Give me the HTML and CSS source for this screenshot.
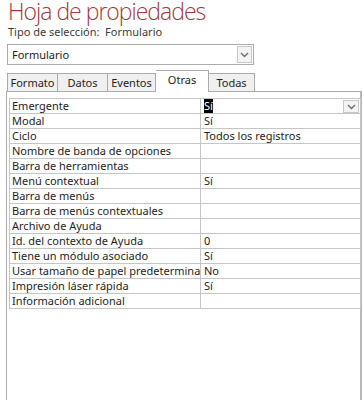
FILE: index.html
```html
<!DOCTYPE html>
<html lang="es">
<head>
  <meta charset="UTF-8">
  <title>Hoja de propiedades</title>
  <link rel="stylesheet" href="styles.css">
</head>
<body>
  <div class="sheet">
    <h1 class="title">Hoja de propiedades</h1>
    <div class="sel-type">Tipo de selección:&nbsp; Formulario</div>

    <div class="combo">
      <span class="combo-text">Formulario</span>
      <span class="combo-btn">
        <svg width="9" height="6" viewBox="0 0 9 6"><path d="M1 1 L4.5 4.5 L8 1" fill="none" stroke="#6d6d6d" stroke-width="1.4"/></svg>
      </span>
    </div>

    <div class="tabs">
      <div class="tab t-formato">Formato</div>
      <div class="tab t-datos">Datos</div>
      <div class="tab t-eventos">Eventos</div>
      <div class="tab t-otras active">Otras</div>
      <div class="tab t-todas">Todas</div>
    </div>

    <div class="panel">
      <table class="props">
        <tr class="first">
          <td class="name">Emergente</td>
          <td class="value"><span class="hl">Sí</span>
            <span class="row-btn">
              <svg width="9" height="6" viewBox="0 0 9 6"><path d="M1 1 L4.5 4.5 L8 1" fill="none" stroke="#6d6d6d" stroke-width="1.4"/></svg>
            </span>
          </td>
        </tr>
        <tr><td class="name">Modal</td><td class="value">Sí</td></tr>
        <tr><td class="name">Ciclo</td><td class="value">Todos los registros</td></tr>
        <tr><td class="name">Nombre de banda de opciones</td><td class="value"></td></tr>
        <tr><td class="name">Barra de herramientas</td><td class="value"></td></tr>
        <tr><td class="name">Menú contextual</td><td class="value">Sí</td></tr>
        <tr><td class="name">Barra de menús</td><td class="value"></td></tr>
        <tr><td class="name">Barra de menús contextuales</td><td class="value"></td></tr>
        <tr><td class="name">Archivo de Ayuda</td><td class="value"></td></tr>
        <tr><td class="name">Id. del contexto de Ayuda</td><td class="value">0</td></tr>
        <tr><td class="name">Tiene un módulo asociado</td><td class="value">Sí</td></tr>
        <tr><td class="name">Usar tamaño de papel predeterminado</td><td class="value">No</td></tr>
        <tr><td class="name">Impresión láser rápida</td><td class="value">Sí</td></tr>
        <tr><td class="name">Información adicional</td><td class="value"></td></tr>
      </table>
    </div>
  </div>
</body>
</html>
```

FILE: styles.css
```css
body {
  margin: 0;
  background: #ffffff;
  font-family: "Noto Sans", "Open Sans", sans-serif;
  color: #1e1e1e;
  overflow: hidden;
}

.sheet {
  padding: 0 2px 0 6px;
}

.title {
  margin: 0 0 0 2px;
  height: 25px;
  font-family: "Open Sans", sans-serif;
  font-weight: 300;
  font-size: 23px;
  line-height: 25px;
  color: #a4373a;
  letter-spacing: -1px;
  margin-top: -1px;
}

.sel-type {
  margin-left: 2px;
  margin-top: 1px;
  font-size: 11px;
  line-height: 13px;
  color: #3c3c3c;
}

.combo {
  margin: 6px 0 0 1px;
  width: 245px;
  height: 19px;
  border: 1px solid #ababab;
  display: flex;
  align-items: center;
  justify-content: space-between;
}

.combo-text {
  padding-left: 4px;
  font-size: 11px;
}

.combo-btn {
  width: 13px;
  height: 15px;
  margin-right: 1px;
  border: 1px solid #c8c8c8;
  background: #f3f3f3;
  display: flex;
  align-items: center;
  justify-content: center;
}

.tabs {
  margin: 6px 0 0 1px;
  display: flex;
  align-items: flex-end;
  height: 20px;
}

.tab {
  height: 17px;
  border: 1px solid #ababab;
  border-bottom: none;
  border-left: none;
  background: #f0f0f0;
  font-size: 11px;
  line-height: 17px;
  text-align: center;
  box-sizing: content-box;
}

.t-formato { width: 49px; border-left: 1px solid #ababab; }
.t-datos { width: 49px; }
.t-eventos { width: 47px; }
.t-otras { width: 52px; }
.t-todas { width: 45px; }

.tab.active {
  height: 21px;
  line-height: 17px;
  background: #ffffff;
  position: relative;
  top: 1px;
  z-index: 1;
}

.panel {
  height: 320px;
  border: 1px solid #ababab;
  border-right-width: 2px;
  border-right-color: #b8b8b8;
  padding: 6px 1px 0 2px;
}

.props {
  width: 352px;
  border-collapse: collapse;
  table-layout: fixed;
  font-size: 11px;
}

.props td {
  height: 14px;
  padding: 0 0 0 2px;
  border: 1px solid #c6c6c6;
  line-height: 14px;
  white-space: nowrap;
  overflow: hidden;
  text-overflow: clip;
}

.props .name {
  width: 188px;
}

.props .value {
  padding-left: 3px;
}

.first .value {
  position: relative;
}

.hl {
  background: #000000;
  color: #ffffff;
}

.row-btn {
  position: absolute;
  right: 1px;
  top: 1px;
  width: 14px;
  height: 11px;
  border: 1px solid #c8c8c8;
  background: #f3f3f3;
  display: flex;
  align-items: center;
  justify-content: center;
}
```
